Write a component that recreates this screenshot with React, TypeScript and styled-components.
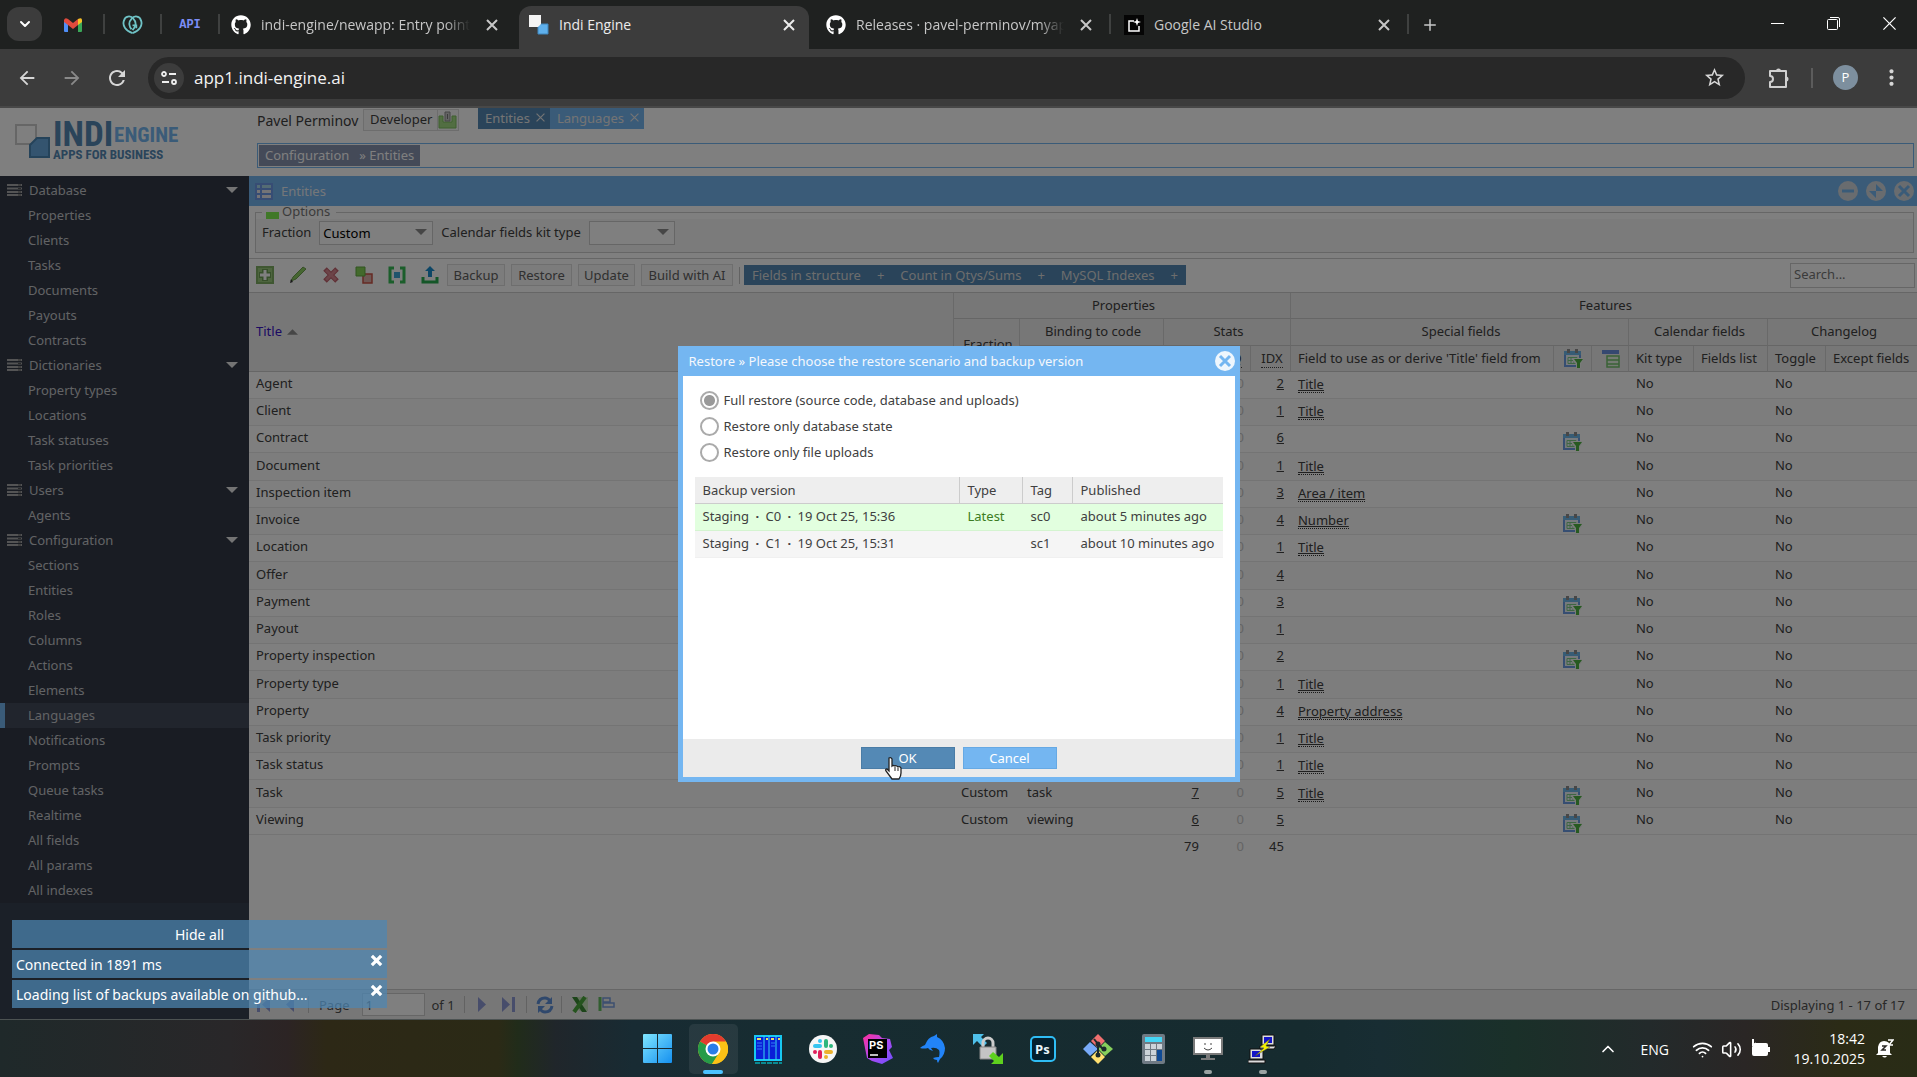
import React from "react";
import styled, { createGlobalStyle, css } from "styled-components";
import { ChevronDown, ChevronUp, Plus, Wifi, Volume2 } from "lucide-react";
import { FaGithub } from "react-icons/fa";
import { MdArrowBack, MdArrowForward, MdRefresh, MdStarBorder, MdMoreVert } from "react-icons/md";

const appFont = '"Noto Sans", "Open Sans", Tahoma, sans-serif';
const uiFont = '"Open Sans", "Noto Sans", sans-serif';

const Global = createGlobalStyle`
  *, *::before, *::after { box-sizing: border-box; }
  html, body, #root { height: 100%; }
  body { margin: 0; overflow: hidden; font-family: ${appFont}; font-size: 13px; color: #404040; background: #1f2120; }
  button, input, select { font: inherit; color: inherit; margin: 0; padding: 0; border: 0; background: none; border-radius: 0; outline: none; }
  svg { display: block; flex: none; }
  a { color: inherit; }
`;

const Screen = styled.div`
  height: 100%;
  display: flex;
  flex-direction: column;
`;

/* ---------- browser chrome ---------- */

const TabStrip = styled.div`
  height: 49px;
  flex: none;
  display: flex;
  align-items: flex-start;
  background: #1f2120;
  color: #c7c7c7;
  font: 14px/20px ${uiFont};
  padding-left: 7px;
`;
const TabMenu = styled.button`
  width: 35px;
  height: 34px;
  margin-top: 7px;
  border-radius: 12px !important;
  background: #3c3c3c !important;
  color: #fff !important;
  display: grid;
  place-items: center;
`;
const PinnedTab = styled.div<{ $w: number }>`
  width: ${p => p.$w}px;
  height: 49px;
  display: grid;
  place-items: center;
`;
const ApiMark = styled.span`
  font: bold 12px/14px "Liberation Mono", monospace;
  color: #7c8df5;
`;
const TabDivider = styled.div`
  width: 2px;
  height: 20px;
  margin-top: 14px;
  background: #3f4140;
`;
const Tab = styled.div<{ $w: number; $l?: number; $r?: number; $active?: boolean }>`
  width: ${p => p.$w}px;
  height: 43px;
  margin-top: 6px;
  padding: 0 ${p => p.$r || 13}px 6px ${p => p.$l || 12}px;
  display: flex;
  align-items: center;
  gap: 10px;
  ${p => p.$active && css`
    background: #3c3c3c;
    color: #ececec;
    border-radius: 12px 12px 0 0;
  `}
`;
const TabTitle = styled.span<{ $fade?: boolean }>`
  flex: 1;
  min-width: 0;
  overflow: hidden;
  white-space: nowrap;
  ${p => p.$fade && css`
    margin-right: 5px;
    mask-image: linear-gradient(90deg, #000 88%, transparent 100%);
  `}
`;
const PlainButton = styled.button`
  display: grid;
  place-items: center;
  flex: none;
`;
const WindowButtons = styled.div`
  margin-left: auto;
  display: flex;
  height: 47px;
  color: #fff;
  button { width: 56px; }
`;
const Toolbar = styled.div`
  height: 59px;
  flex: none;
  display: flex;
  align-items: center;
  background: #3c3c3c;
  border-bottom: 2px solid #484848;
  padding: 0 13px;
  color: #d6d6d6;
`;
const NavButton = styled(PlainButton)<{ $off?: boolean }>`
  width: 28px;
  height: 28px;
  margin-right: 17px !important;
  opacity: ${p => (p.$off ? 0.5 : 1)};
`;
const Omnibox = styled.div`
  flex: 1;
  height: 42px;
  border-radius: 21px;
  background: #282828;
  display: flex;
  align-items: center;
  padding: 0 19px 0 6px;
`;
const SiteInfo = styled(PlainButton)`
  width: 30px;
  height: 30px;
  border-radius: 50% !important;
  background: #3c3c3c !important;
`;
const Url = styled.input`
  flex: 1;
  margin-left: 10px !important;
  font: 17px/24px ${uiFont} !important;
  color: #f2f2f2 !important;
`;
const ToolbarEnd = styled.div`
  display: flex;
  align-items: center;
  padding-left: 23px;
`;
const ToolbarRule = styled.div`
  width: 2px;
  height: 20px;
  margin: 0 20px 0 21px;
  background: #5c5c5c;
`;
const Avatar = styled.button`
  width: 25px;
  height: 25px;
  border-radius: 50% !important;
  background: #7d8f9e !important;
  color: #fff !important;
  font: 13px/25px ${uiFont} !important;
  margin-right: 21px !important;
`;

/* ---------- page ---------- */

const Page = styled.div`
  position: relative;
  flex: 1;
  min-height: 0;
  display: flex;
  flex-direction: column;
  background: #fff;
`;
const PageHead = styled.header`
  height: 68px;
  flex: none;
  display: flex;
`;
const LogoBox = styled.div`
  width: 249px;
  padding: 14px 0 0 15px;
  display: flex;
  gap: 3px;
`;
const LogoText = styled.div`
  font-family: "Roboto Condensed", "Liberation Sans Narrow", "Liberation Sans", sans-serif;
  font-weight: bold;
  color: #5489b5;
`;
const LogoTop = styled.div`
  display: flex;
  align-items: center;
  height: 26px;
  font-size: 35px;
  line-height: 26px;
  span { font-size: 21px; color: #74b6f1; margin-left: 1px; }
`;
const LogoSub = styled.div`
  font-size: 13px;
  line-height: 14px;
`;
const HeadMain = styled.div`
  flex: 1;
  padding: 0 3px 0 8px;
`;
const HeadTop = styled.div`
  height: 35px;
  display: flex;
  align-items: flex-start;
  font-size: 14px;
`;
const UserName = styled.span`
  line-height: 26px;
  width: 106px;
  white-space: nowrap;
`;
const RoleBox = styled.div`
  display: flex;
  height: 22px;
  margin-top: 1px;
  border: 1px solid #dadada;
  background: #f8f8f8;
  line-height: 20px;
`;
const RoleName = styled.button`
  padding: 0 6px 2px !important;
  width: 74px;
  white-space: nowrap;
  border-right: 1px solid #dadada !important;
  line-height: 18px !important;
  font-size: 13px !important;
`;
const WorkTabs = styled.div`
  display: flex;
  margin-left: 19px;
`;
const WorkTab = styled.div<{ $active?: boolean }>`
  height: 21px;
  padding: 0 4px 2px 7px;
  display: flex;
  align-items: center;
  gap: 5px;
  font-size: 13px;
  line-height: 18px;
  color: #e8e8e8;
  background: ${p => (p.$active ? "#5489b5" : "#74b6f1")};
`;
const Crumbs = styled.nav`
  height: 25px;
  border: 1px solid #74b6f1;
  padding: 1px;
  display: flex;
  color: #fff;
`;
const Crumb = styled.a`
  display: block;
  height: 21px;
  line-height: 20px;
  background: #8894b0;
  text-decoration: none;
  padding: 0 6px;
  & + & { padding-left: 4px; }
`;
const Body = styled.div`
  flex: 1;
  min-height: 0;
  display: flex;
`;
const Sidebar = styled.nav`
  width: 249px;
  flex: none;
  background: #374150;
`;
const Menu = styled.ul`
  list-style: none;
  margin: 0;
  padding: 2px 0 0;
  background: #323846;
`;
const MenuItem = styled.li<{ $group?: boolean; $on?: boolean }>`
  height: 25px;
  display: flex;
  align-items: center;
  padding: 0 11px 1px ${p => (p.$group ? 7 : 28)}px;
  gap: 7px;
  color: #c4c6ca;
  ${p => p.$on && css`
    background: #424a5a;
    border-left: 5px solid #74b6f1;
    padding-left: 23px;
  `}
  a { flex: 1; text-decoration: none; line-height: 20px; }
`;
const Main = styled.main`
  flex: 1;
  min-width: 0;
  display: flex;
  flex-direction: column;
`;
const PanelTitle = styled.div`
  height: 30px;
  flex: none;
  display: flex;
  align-items: center;
  gap: 8px;
  padding: 0 3px 0 6px;
  background: #74b6f1;
  color: #e9eef3;
  h1 { flex: 1; margin: 0; font-size: 13px; font-weight: normal; line-height: 20px; }
`;
const PanelTools = styled.div`
  display: flex;
  gap: 8px;
`;
const OptionsArea = styled.div`
  height: 52px;
  flex: none;
  padding: 0 3px 0 6px;
`;
const Options = styled.fieldset`
  margin: 0;
  height: 47px;
  border: 1px solid #ccc;
  background: linear-gradient(transparent 6px, #f6f6f6 6px);
  padding: 0 6px;
  min-width: 0;
  legend {
    height: 13px;
    display: flex;
    align-items: center;
    gap: 3px;
    padding: 0 6px 2px 4px;
    color: #777;
    line-height: 11px;
  }
  legend::before { content: ""; width: 13px; height: 7px; margin-top: 8px; background: #80f050; }
`;
const OptionRow = styled.div`
  display: flex;
  align-items: center;
  height: 24px;
  margin-top: 2px;
  label { padding-bottom: 2px; }
`;
const Combo = styled.span<{ $w: number }>`
  position: relative;
  display: block;
  width: ${p => p.$w}px;
  height: 24px;
  margin: 0 8px;
  border: 1px solid #ccc;
  background: #fff;
  select { appearance: none; width: 100%; height: 22px; padding-left: 3px; color: #000; line-height: 20px; }
  svg { position: absolute; right: 5px; top: 7px; pointer-events: none; }
`;
const ActionBar = styled.div`
  height: 35px;
  flex: none;
  display: flex;
  align-items: center;
  border-top: 1px solid #ccc;
  border-bottom: 1px solid #ccc;
  padding: 0 2px 1px 7px;
`;
const IconRow = styled.div`
  display: flex;
  gap: 15px;
  margin-right: 8px;
  button { width: 18px; height: 18px; display: grid; place-items: center; }
`;
const BarButton = styled.button<{ $w: number }>`
  width: ${p => p.$w}px;
  height: 22px;
  margin-right: 6px !important;
  padding-bottom: 1px !important;
  border: 1px solid #dcdcdc !important;
  background: #f8f8f8 !important;
  white-space: nowrap;
  line-height: 18px !important;
  color: #606060 !important;
`;
const Rule = styled.span<{ $m?: string }>`
  width: 1px;
  height: 17px;
  background: #c4c4c4;
  margin: ${p => p.$m || "0 4px 0 0"};
`;
const CountBar = styled.div`
  display: flex;
  height: 20px;
  background: #5489b5;
  color: #dadada;
`;
const CountButton = styled.button`
  display: flex;
  gap: 16px;
  padding: 0 8px !important;
  line-height: 20px !important;
  white-space: nowrap;
`;
const Search = styled.input`
  width: 125px;
  height: 25px;
  margin-left: auto !important;
  padding: 0 3px 2px !important;
  border: 1px solid #ccc !important;
  &::placeholder { color: #777; opacity: 1; }
`;
const Grid = styled.table`
  width: 100%;
  table-layout: fixed;
  border-collapse: separate;
  border-spacing: 0;
  white-space: nowrap;
  line-height: 20px;
  th {
    background: #eee;
    font-weight: normal;
    border-right: 1px solid #d2d2d2;
    border-bottom: 1px solid #ccc;
    padding: 0 4px 2px 7px;
    height: 26px;
    overflow: hidden;
  }
  thead tr:nth-child(2) th { height: 27px; }
  th.last { border-right: 0; }
  th.left { text-align: left; }
  td { height: 27px; padding: 0 7px 4px; border-bottom: 1px solid #e8e8e8; overflow: hidden; }
  tbody tr:nth-child(4n) td { height: 28px; }
  tbody tr:nth-child(even) td { background: #fafafa; }
  tfoot td { border: 0; height: 26px; }
  .num { text-align: right; }
  .zero { text-align: right; color: #c8c8c8; }
  td svg { margin: 4px auto -4px; }
  th svg { margin: 2px auto 0; }
`;
const SortHead = styled.button`
  display: flex;
  align-items: center;
  gap: 5px;
  color: #3914c8 !important;
`;
const Dotted = styled.span`
  display: inline-block;
  line-height: 17px;
  border-bottom: 1px dotted #444;
`;
const FieldLink = styled.a`
  display: inline-block;
  line-height: 16px;
  border-bottom: 1px dotted #333;
  vertical-align: middle;
`;
const Spring = styled.div`
  flex: 1;
`;
const Pager = styled.footer`
  height: 30px;
  flex: none;
  display: flex;
  align-items: center;
  border-top: 1px solid #ccc;
  background: #eee;
  padding: 0 12px 0 6px;
  color: #505050;
  label { display: flex; align-items: center; gap: 12px; }
  input { width: 63px; height: 23px; border: 1px solid #ccc; background: #fff; padding-left: 3px; }
  button { width: 16px; height: 18px; display: grid; place-items: center; flex: none; }
  p { margin: 0 0 0 auto; }
`;
const Pair = styled.div`
  display: flex;
  gap: 11px;
`;
const OfCount = styled.span`
  margin-left: 7px;
`;

/* ---------- dialog over the page ---------- */

const Shade = styled.div`
  position: absolute;
  inset: 0;
  background: rgba(0, 0, 0, 0.5);
  display: flex;
  align-items: center;
  justify-content: center;
  padding-top: 1px;
`;
const Dialog = styled.section`
  width: 562px;
  height: 436px;
  display: flex;
  flex-direction: column;
  background: #74b6f1;
  padding: 0 5px 5px;
`;
const DialogHead = styled.div`
  height: 30px;
  display: flex;
  align-items: center;
  padding: 0 0 1px 6px;
  color: #f4f8fc;
  h2 { flex: 1; margin: 0; font-size: 13px; font-weight: normal; line-height: 20px; }
`;
const DialogBody = styled.div`
  flex: 1;
  background: #fff;
  padding: 11px 12px 0;
`;
const RadioLine = styled.label`
  display: flex;
  align-items: center;
  height: 26px;
  gap: 5px;
  padding-left: 5px;
  input {
    appearance: none;
    width: 19px;
    height: 19px;
    border: 2px solid #aaa;
    border-radius: 50%;
    background: #fff;
  }
  input:checked { background: radial-gradient(circle, #999 0 5px, #fff 6px); }
`;
const Backups = styled.table`
  width: 100%;
  margin-top: 12px;
  table-layout: fixed;
  border-collapse: separate;
  border-spacing: 0;
  white-space: nowrap;
  line-height: 20px;
  th { height: 27px; padding: 0 8px; background: #eee; text-align: left; font-weight: normal; border-bottom: 1px solid #ccc; border-right: 1px solid #ccc; }
  th:last-child { border-right: 0; }
  td { height: 27px; padding: 0 8px 2px; background: #f5f5f5; border-bottom: 1px solid #f0f0f0; }
  tr.latest td { background: #e2ffdf; border-color: #d4f4d0; }
  td.tag { color: #3c7d22; }
`;
const Dot = styled.span`
  margin: 0 3px;
  font-weight: bold;
`;
const DialogFoot = styled.div`
  height: 38px;
  display: flex;
  align-items: center;
  justify-content: center;
  gap: 8px;
  background: #ebebeb;
`;
const DialogButton = styled.button<{ $main?: boolean }>`
  position: relative;
  width: 94px;
  height: 22px;
  line-height: 20px !important;
  color: #fff !important;
  border: 1px solid ${p => (p.$main ? "#4a7ca6" : "#66a9e4")} !important;
  background: ${p => (p.$main ? "#5489b5" : "#74b6f1")} !important;
`;
const Pointer = styled.svg`
  position: absolute;
  left: 22px;
  top: 8px;
`;

const Toasts = styled.div`
  position: absolute;
  left: 12px;
  bottom: 11px;
  width: 375px;
  display: flex;
  flex-direction: column;
  gap: 2px;
`;
const Toast = styled.div<{ $center?: boolean }>`
  height: 28px;
  display: flex;
  align-items: flex-start;
  justify-content: ${p => (p.$center ? "center" : "space-between")};
  padding: 0 4px !important;
  background: rgba(77, 135, 179, 0.72) !important;
  color: #fff !important;
  font-size: 14px !important;
  line-height: 29px !important;
  white-space: nowrap;
  svg { margin-top: 4px; }
`;

/* ---------- desktop task bar ---------- */

const TaskBar = styled.div`
  position: relative;
  height: 58px;
  flex: none;
  display: flex;
  justify-content: center;
  align-items: flex-start;
  border-top: 1px solid #4c5252;
  background: linear-gradient(90deg, #1f292a 0, #292729 12%, #2c2424 15%, #2d2816 17%, #2b2a16 26%, #212c1a 27%, #20262b 29%, #182b33 33%, #172c31 40%, #162b2f 68%, #182d33 72%, #1a3029 79%, #232a2b 86%, #2a2625 91%, #2b2b16 96%, #292c16 100%);
  color: #fff;
  font-family: ${uiFont};
`;
const Apps = styled.div`
  display: flex;
  gap: 6px;
  padding: 4px 0 0 4px;
`;
const AppButton = styled.button<{ $on?: boolean }>`
  position: relative;
  width: 49px;
  height: 50px;
  display: grid;
  place-items: center;
  border-radius: 5px !important;
  ${p => p.$on && css`background: rgba(255, 255, 255, 0.07) !important;`}
`;
const RunMark = styled.i<{ $on?: boolean }>`
  position: absolute;
  bottom: 0;
  left: 50%;
  translate: -50% 0;
  height: 4px;
  width: ${p => (p.$on ? 20 : 8)}px;
  border-radius: 2px;
  background: ${p => (p.$on ? "#4cc2ff" : "#9aa3a3")};
`;
const Tray = styled.div`
  position: absolute;
  right: 23px;
  top: 0;
  height: 58px;
  display: flex;
  align-items: center;
  font-size: 14px;
`;
const Clock = styled.div`
  width: 84px;
  text-align: right;
  line-height: 20px;
  margin: 0 11px 0 9px;
`;
const TrayIcons = styled.div`
  display: flex;
  align-items: center;
  gap: 8px;
  margin-left: 23px;
`;
const TrayMore = styled(PlainButton)`
  margin-right: 23px !important;
`;

/* ---------- drawings ---------- */

const Cross = ({ s = 14, w = 2, c = "currentColor" }: { s?: number; w?: number; c?: string }) => (
  <svg width={s} height={s} viewBox="0 0 14 14"><path d="M2 2l10 10M12 2L2 12" stroke={c} strokeWidth={w} fill="none" /></svg>
);
const Tri = ({ up, c = "#8c8c8c", w = 12 }: { up?: boolean; c?: string; w?: number }) => (
  <svg width={w} height="6" viewBox="0 0 12 6"><path d={up ? "M0 6L6 0L12 6Z" : "M0 0H12L6 6Z"} fill={c} /></svg>
);
const Gmail = () => (
  <svg width="18" height="14" viewBox="0 0 18 14">
    <path d="M0 2v11a1 1 0 001 1h3V5z" fill="#4f8ef7" /><path d="M18 2v11a1 1 0 01-1 1h-3V5z" fill="#3aa757" />
    <path d="M0 2Q1-1 4 1l5 4 5-4v6l-5 4-5-4-4-3z" fill="#e04a3d" /><path d="M14 1q4-2 4 1v2l-4 3z" fill="#f6bf26" />
  </svg>
);
const GoDaddy = () => (
  <svg width="21" height="19" viewBox="0 0 22 20" fill="none" stroke="#6fc3c6" strokeWidth="1.900">
    <path d="M11 19C4 17 0 11 2 6c1-5 7-6 10-2 4 4 2 9-1 12" /><path d="M11 19c7-2 11-8 9-13-1-5-7-6-10-2-4 4-2 9 0 11" /><path d="M11 11h4v3" />
  </svg>
);
const Squares = () => (
  <svg width="20" height="20" viewBox="0 0 20 20"><path d="M9 9h10v10H9z" fill="#5fb0ec" stroke="#3e86bd" /><path d="M0 0h12v9l-3 3H0z" fill="#f4f4f4" /></svg>
);
const Studio = () => (
  <svg width="20" height="20" viewBox="0 0 20 20"><path d="M0 0h20v20H0z" fill="#050505" /><path d="M10 6H5v10h10v-5" fill="none" stroke="#fff" strokeWidth="1.500" /><path d="M13 3l1 3 3 1-3 1-1 3-1-3-3-1 3-1z" fill="#fff" /></svg>
);
const Logo = () => (
  <svg width="35" height="37" viewBox="0 0 35 37"><path d="M1 3h20v19H1z" fill="#fff" stroke="#ccc" strokeWidth="2" /><path d="M22 16h12v19H15V23z" fill="#68a8de" stroke="#4b86b4" strokeWidth="2" /></svg>
);
const Stack = () => (
  <svg width="15" height="12" viewBox="0 0 15 12"><path d="M0 1h15M0 4.500h15M0 8h15M0 11h15" stroke="#a8a8aa" strokeWidth="2" /><path d="M11 1h3M11 4.500h3M11 8h3M11 11h3" stroke="#555" /></svg>
);
const ListIcon = () => (
  <svg width="18" height="17" viewBox="0 0 18 17"><path d="M0 0h18v17H0z" fill="#6f9be8" /><path d="M2 2h3v3H2zM7 2h9v3H7z" fill="#a8d8e8" /><path d="M2 7h3v3H2zM2 12h3v3H2zM7 7h9v3H7zM7 12h9v3H7z" fill="#e8e8ee" /></svg>
);
const RoundTool = ({ kind, c = "#d2d9df", b = "#74b6f1" }: { kind: string; c?: string; b?: string }) => (
  <svg width="20" height="20" viewBox="0 0 20 20"><circle cx="10" cy="10" r="10" fill={c} />
    {kind === "min" && <path d="M4 10h12" stroke={b} strokeWidth="3" />}
    {kind === "max" && <path d="M10 3l7 7h-7zM10 17l-7-7h7z" fill={b} />}
    {kind === "close" && <path d="M5 5l10 10M15 5L5 15" stroke={b} strokeWidth="3" />}
  </svg>
);
const RoleIcon = () => (
  <svg width="20" height="18" viewBox="0 0 20 18"><path d="M1 5h4v6h9V5h4v12H1z" fill="#a4dc84" stroke="#7cc05c" /><path d="M7 1h5v9H7z" fill="#c8c8c8" stroke="#8c8c8c" /><path d="M9.500 3v5" stroke="#777" /></svg>
);
const CalendarFilter = () => (
  <svg width="19" height="19" viewBox="0 0 19 19">
    <path d="M1 4h15v13H1z" fill="#eef4fa" stroke="#6c9ce4" strokeWidth="2" /><path d="M0 2h17v4H0z" fill="#6fb8ea" />
    <path d="M4.500 0v4M12.500 0v4" stroke="#8f8f8f" strokeWidth="3" /><path d="M4 8.500h9v6H4zM4 11.500h9M7 8v6M10 8v6" fill="none" stroke="#7fcf86" />
    <path d="M9 9h10v3l-2 3v4h-5v-4l-3-3z" fill="#f4f8f4" /><path d="M10 10h9l-3 4v5h-3v-5z" fill="#4fb443" />
  </svg>
);
const PanelList = () => (
  <svg width="18" height="19" viewBox="0 0 18 19"><path d="M0 1h17v4H0z" fill="#6a90e0" /><path d="M5 7h12v11H5zM5 11h12M5 15h12" fill="#eaf6e6" stroke="#74c46e" strokeWidth="1.500" /></svg>
);
const Svg18 = ({ children }: { children: React.ReactNode }) => <svg width="18" height="18" viewBox="0 0 18 18">{children}</svg>;
const toolIcons: [string, React.ReactNode][] = [
  ["Add", <Svg18><path d="M1 1h16v16H1z" fill="#9bc87c" stroke="#7fae62" strokeWidth="2" /><path d="M9 3v12M3 9h12" stroke="#6f9f56" strokeWidth="6" /><path d="M9 4v10M4 9h10" stroke="#fff" strokeWidth="3" /></Svg18>],
  ["Edit", <Svg18><path d="M2 15l2-4L14 1l3 2L7 13z" fill="#8ccc62" stroke="#6f9f50" /><path d="M1 17l3-1-2-3z" fill="#333" /></Svg18>],
  ["Delete", <Svg18><path d="M3 3l12 12M15 3L3 15" stroke="#c0606c" strokeWidth="5" /><path d="M4 4l10 10M14 4L4 14" stroke="#d88891" strokeWidth="3" /></Svg18>],
  ["Duplicate", <Svg18><path d="M8 8h9v9H8z" fill="#dcb0aa" stroke="#cc5448" strokeWidth="1.500" /><path d="M1 1h9v9H1z" fill="#86d458" stroke="#62aa42" /></Svg18>],
  ["Brackets", <Svg18><path d="M6 2H2v14h4M12 2h4v14h-4" fill="none" stroke="#36bc56" strokeWidth="3" /><path d="M6 6h6v6H6z" fill="#40a8d8" /></Svg18>],
  ["Export", <Svg18><path d="M2 11v5h14v-5" fill="none" stroke="#28ac50" strokeWidth="3" /><path d="M9 0l5 5h-3v6H7V5H4z" fill="#1a8ccc" /></Svg18>],
];
const HandPointer = () => (
  <Pointer width="20" height="24" viewBox="0 0 20 24">
    <path d="M5 2q2-1 3 1v7q1-1 3 0 1-1 3 1 2-1 3 1v5q0 3-2 6H8L2 15q-1-2 1-2l2 2z" fill="#fff" stroke="#222" strokeWidth="1.300" /><path d="M11 11v4M14 12v3" stroke="#222" />
  </Pointer>
);

const taskIcons: [string, React.ReactNode, string?][] = [
  ["Start", <svg width="30" height="30" viewBox="0 0 30 30"><defs><linearGradient id="win" x1="0" y1="0" x2="1" y2="1"><stop offset="0" stopColor="#7fe6ff" /><stop offset="1" stopColor="#1590f0" /></linearGradient></defs><path d="M0 1q0-1 1-1h13v14H0zM15 0h13q1 0 1 1v13H15zM0 15h14v14H1q-1 0-1-1zM15 15h14v13q0 1-1 1H15z" fill="url(#win)" /></svg>],
  ["Chrome", <svg width="30" height="30" viewBox="0 0 30 30"><circle cx="15" cy="15" r="15" fill="#fbc116" /><path d="M15 15L2 7.500A15 15 0 0128 7.500z" fill="#e33b2e" /><path d="M2 7.500A15 15 0 0014 30l7.500-12L15 15z" fill="#269b48" /><path d="M15 7.500h13A15 15 0 0114 30l7.500-11z" fill="#fbc116" /><circle cx="15" cy="15" r="7.500" fill="#fff" /><circle cx="15" cy="15" r="5.500" fill="#2a7de8" /></svg>, "on"],
  ["Far Manager", <svg width="28" height="29" viewBox="0 0 28 29"><path d="M1 1h26v24H1z" fill="#0a1fd8" stroke="#18c8f0" strokeWidth="2" /><path d="M10 1v24M15 1v24M22 1v24" stroke="#38d8f0" /><path d="M3 4h4M12 4h2M17 4h3M24 4h2" stroke="#e8e060" strokeWidth="2" /><path d="M3 8h5M3 11h5M3 14h5M17 8h4M17 11h4" stroke="#3080f8" /><path d="M1 28h27" stroke="#0a8a92" strokeWidth="2" strokeDasharray="5 1" /></svg>],
  ["Slack", <svg width="28" height="28" viewBox="0 0 28 28"><circle cx="14" cy="14" r="14" fill="#f6f6f6" /><g fill="#36c5f0"><rect x="4" y="9" width="9" height="4" rx="2" /><circle cx="11" cy="6" r="2" /></g><g fill="#2eb67d"><rect x="15" y="4" width="4" height="9" rx="2" /><circle cx="22" cy="11" r="2" /></g><g fill="#ecb22e"><rect x="15" y="15" width="9" height="4" rx="2" /><circle cx="17" cy="22" r="2" /></g><g fill="#e01e5a"><rect x="9" y="15" width="4" height="9" rx="2" /><circle cx="6" cy="17" r="2" /></g></svg>],
  ["PhpStorm", <svg width="30" height="30" viewBox="0 0 30 30"><defs><linearGradient id="ps" x1="0" y1="0" x2="1" y2="1"><stop offset="0" stopColor="#ff2e9a" /><stop offset="0.500" stopColor="#b04af0" /><stop offset="1" stopColor="#6a50ff" /></linearGradient></defs><path d="M0 4l6-4 10 1 3 3 8 1 2 8-3 3 4 8-11 6-10-3-5-3z" fill="url(#ps)" /><path d="M5 5h19v19H5z" fill="#000" /><path d="M7 21h8" stroke="#fff" strokeWidth="1.500" /><text x="6" y="15" fontSize="11" fontWeight="bold" fontFamily="Inter, sans-serif" fill="#fff">PS</text></svg>],
  ["Dolphin", <svg width="26" height="30" viewBox="0 0 26 30"><path d="M0 14q2-2 5-3Q8 3 14 2l3-2q0 2 0 3 7 3 8 11 0 7-5 11l-2 4q-1-1-1-3-3 0-4-2 3-1 6-1 1-5 0-7-3-3-8-2l2 3q-4-1-5-3-4 1-8 0z" fill="#2284f8" /></svg>],
  ["WinSCP", <svg width="30" height="30" viewBox="0 0 30 30"><path d="M0 0h11L8 3l6 6-4 4-6-6-4 4z" fill="#4fc0ea" /><path d="M10 14V9a5 5 0 0110 0v5" fill="none" stroke="#ccc" strokeWidth="3" /><path d="M7 13h16v12H7z" fill="#c4c4c4" stroke="#888" /><path d="M30 30H18l3-3-5-5 4-4 6 5 4-4z" fill="#5ed01e" /></svg>],
  ["Photoshop", <svg width="26" height="26" viewBox="0 0 26 26"><rect x="1" y="1" width="24" height="24" rx="4" fill="#04202e" stroke="#2fbdf5" strokeWidth="2" /><text x="5" y="18" fontSize="13" fontWeight="bold" fontFamily="Open Sans, sans-serif" fill="#e8f4fa">Ps</text></svg>],
  ["Git", <svg width="30" height="30" viewBox="0 0 30 30"><path d="M15 0l7 7-7 7-7-7z" fill="#f07070" /><path d="M22 8l8 7-8 7-7-7z" fill="#86cf5c" /><path d="M15 16l7 7-7 7-7-7z" fill="#ffe070" /><path d="M7 8l8 7-8 7-7-7z" fill="#78aaf8" /><path d="M11 5l4 5v12M15 10l5 5" fill="none" stroke="#1c2a2c" strokeWidth="2" /><circle cx="15" cy="10" r="2.500" fill="#1c2a2c" /><circle cx="15" cy="21" r="2.500" fill="#1c2a2c" /><circle cx="21" cy="15" r="2.500" fill="#1c2a2c" /></svg>],
  ["Calculator", <svg width="23" height="30" viewBox="0 0 23 30"><rect width="23" height="30" rx="2" fill="#6f7a84" /><path d="M3 3h17v5H3z" fill="#45d5f5" /><path d="M3 10h5v5H3zM9 10h5v5H9zM15 10h5v5h-5zM3 16h5v5H3zM9 16h5v5H9zM3 22h5v5H3zM9 22h5v5H9z" fill="#ccd3d9" /><path d="M15 16h5v11h-5z" fill="#0f4a94" /></svg>],
  ["Remote", <svg width="30" height="24" viewBox="0 0 30 24"><path d="M1 1h28v16H1z" fill="#fff" stroke="#7a7a7a" strokeWidth="2" /><path d="M13 18h4v3h5v2H8v-2h5z" fill="#7a7a7a" /><path d="M12 6v2M18 6v2M11 11q4 4 8 0" stroke="#444" fill="none" /></svg>, "run"],
  ["PuTTY", <svg width="30" height="30" viewBox="0 0 30 30"><path d="M14 1h12v10H14zM12 12h16l-2 3H12zM2 15h13v10H2zM0 26h17v3H0z" fill="#ddd" stroke="#111" /><path d="M16 3h8v6h-8zM4 17h8v6H4z" fill="#1414c8" /><path d="M22 5l-10 8 4 1-9 8 15-9-4-1z" fill="#f4f000" stroke="#444" strokeWidth="0.500" /></svg>, "run"],
];

/* ---------- data ---------- */

const menu: [string, string[]][] = [
  ["Database", ["Properties", "Clients", "Tasks", "Documents", "Payouts", "Contracts"]],
  ["Dictionaries", ["Property types", "Locations", "Task statuses", "Task priorities"]],
  ["Users", ["Agents"]],
  ["Configuration", ["Sections", "Entities", "Roles", "Columns", "Actions", "Elements", "Languages", "Notifications", "Prompts", "Queue tasks", "Realtime", "All fields", "All params", "All indexes"]],
];

type Row = { title: string; table: string; qty: number; idx: number; field?: string; cal?: boolean };
const rows: Row[] = [
  { title: "Agent", table: "agent", qty: 5, idx: 2, field: "Title" },
  { title: "Client", table: "client", qty: 4, idx: 1, field: "Title" },
  { title: "Contract", table: "contract", qty: 8, idx: 6, cal: true },
  { title: "Document", table: "document", qty: 4, idx: 1, field: "Title" },
  { title: "Inspection item", table: "inspectionItem", qty: 5, idx: 3, field: "Area / item" },
  { title: "Invoice", table: "invoice", qty: 6, idx: 4, field: "Number", cal: true },
  { title: "Location", table: "location", qty: 1, idx: 1, field: "Title" },
  { title: "Offer", table: "offer", qty: 5, idx: 4 },
  { title: "Payment", table: "payment", qty: 5, idx: 3, cal: true },
  { title: "Payout", table: "payout", qty: 4, idx: 1 },
  { title: "Property inspection", table: "inspection", qty: 4, idx: 2, cal: true },
  { title: "Property type", table: "propertyType", qty: 1, idx: 1, field: "Title" },
  { title: "Property", table: "property", qty: 8, idx: 4, field: "Property address" },
  { title: "Task priority", table: "taskPriority", qty: 3, idx: 1, field: "Title" },
  { title: "Task status", table: "taskStatus", qty: 3, idx: 1, field: "Title" },
  { title: "Task", table: "task", qty: 7, idx: 5, field: "Title", cal: true },
  { title: "Viewing", table: "viewing", qty: 6, idx: 5, cal: true },
];
const columnWidths = [66, 144, 42, 45, 40, 263, 38, 37, 65, 74, 58, 91];

const PagerArrow = ({ flip, bar }: { flip?: boolean; bar?: boolean }) => (
  <svg width="16" height="15" viewBox="0 0 16 15"><g transform={flip ? "matrix(-1 0 0 1 16 0)" : undefined} fill="#8f9ad6"><path d={bar ? "M1 0l8 7.500L1 15z" : "M4 0l8 7.500L4 15z"} />{bar && <path d="M11 0h3v15h-3z" />}</g></svg>
);

export default function App() {
  return (
    <>
      <Global />
      <Screen>
        <TabStrip>
          <TabMenu aria-label="Search tabs"><ChevronDown size={16} strokeWidth={3} /></TabMenu>
          <PinnedTab $w={61}><Gmail /></PinnedTab><TabDivider />
          <PinnedTab $w={55}><GoDaddy /></PinnedTab><TabDivider />
          <PinnedTab $w={56}><ApiMark>API</ApiMark></PinnedTab><TabDivider />
          <Tab $w={299} $l={11} $r={20}><FaGithub size={20} color="#fff" /><TabTitle $fade>indi-engine/newapp: Entry point</TabTitle><PlainButton aria-label="Close tab"><Cross /></PlainButton></Tab>
          <Tab $w={290} $l={10} $active><Squares /><TabTitle>Indi Engine</TabTitle><PlainButton aria-label="Close tab"><Cross /></PlainButton></Tab>
          <Tab $w={300} $l={17} $r={16}><FaGithub size={20} color="#fff" /><TabTitle $fade>Releases · pavel-perminov/myapp</TabTitle><PlainButton aria-label="Close tab"><Cross /></PlainButton></Tab>
          <TabDivider />
          <Tab $w={296} $l={13} $r={16}><Studio /><TabTitle>Google AI Studio</TabTitle><PlainButton aria-label="Close tab"><Cross /></PlainButton></Tab>
          <TabDivider />
          <PinnedTab $w={41}><Plus size={18} strokeWidth={2} /></PinnedTab>
          <WindowButtons>
            <PlainButton aria-label="Minimize"><svg width="13" height="13"><path d="M0 6.500h13" stroke="#fff" /></svg></PlainButton>
            <PlainButton aria-label="Restore"><svg width="13" height="13" viewBox="0 0 13 13" fill="none" stroke="#fff"><rect x="0.500" y="2.500" width="10" height="10" rx="1" /><path d="M3 .5h8q1.500 0 1.500 1.500v8" /></svg></PlainButton>
            <PlainButton aria-label="Close"><Cross s={17} w={1} /></PlainButton>
          </WindowButtons>
        </TabStrip>
        <Toolbar>
          <NavButton aria-label="Back"><MdArrowBack size={22} /></NavButton>
          <NavButton $off aria-label="Forward"><MdArrowForward size={22} /></NavButton>
          <NavButton aria-label="Reload"><MdRefresh size={24} /></NavButton>
          <Omnibox>
            <SiteInfo aria-label="Site information"><svg width="16" height="14" viewBox="0 0 16 14" fill="none" stroke="#eee" strokeWidth="1.800"><circle cx="3" cy="3" r="2" /><path d="M8 3h7M1 11h7" /><circle cx="13" cy="11" r="2" /></svg></SiteInfo>
            <Url aria-label="Address" defaultValue="app1.indi-engine.ai" />
            <PlainButton aria-label="Bookmark"><MdStarBorder size={23} /></PlainButton>
          </Omnibox>
          <ToolbarEnd>
            <PlainButton aria-label="Extensions"><svg width="22" height="22" viewBox="0 0 22 22" fill="none" stroke="#d0d0d0" strokeWidth="2"><path d="M2 4h16v16H2v-5q3 0 3-3t-3-3z" strokeLinejoin="round" /><path d="M8 4a2.500 2.500 0 015 0zM18 9.500a2.500 2.500 0 010 5z" fill="#d0d0d0" stroke="none" /></svg></PlainButton>
            <ToolbarRule />
            <Avatar>P</Avatar>
            <PlainButton aria-label="Menu"><MdMoreVert size={25} /></PlainButton>
          </ToolbarEnd>
        </Toolbar>

        <Page>
          <PageHead>
            <LogoBox>
              <Logo />
              <LogoText><LogoTop>INDI<span>ENGINE</span></LogoTop><LogoSub>APPS FOR BUSINESS</LogoSub></LogoText>
            </LogoBox>
            <HeadMain>
              <HeadTop>
                <UserName>Pavel Perminov</UserName>
                <RoleBox><RoleName>Developer</RoleName><PlainButton aria-label="Switch"><RoleIcon /></PlainButton></RoleBox>
                <WorkTabs>
                  <WorkTab $active>Entities<PlainButton aria-label="Close Entities"><Cross s={11} w={1.5} /></PlainButton></WorkTab>
                  <WorkTab>Languages<PlainButton aria-label="Close Languages"><Cross s={11} w={1.5} /></PlainButton></WorkTab>
                </WorkTabs>
              </HeadTop>
              <Crumbs><Crumb href="#configuration">Configuration</Crumb><Crumb href="#entities">» Entities</Crumb></Crumbs>
            </HeadMain>
          </PageHead>
          <Body>
            <Sidebar>
              <Menu>
                {menu.map(([group, items]) => (
                  <React.Fragment key={group}>
                    <MenuItem $group><Stack /><a href="#group">{group}</a><Tri c="#e8e8e8" /></MenuItem>
                    {items.map(i => <MenuItem key={i} $on={i === "Languages"}><a href="#item">{i}</a></MenuItem>)}
                  </React.Fragment>
                ))}
              </Menu>
            </Sidebar>
            <Main>
              <PanelTitle>
                <ListIcon /><h1>Entities</h1>
                <PanelTools>
                  <PlainButton aria-label="Minimize panel"><RoundTool kind="min" /></PlainButton>
                  <PlainButton aria-label="Maximize panel"><RoundTool kind="max" /></PlainButton>
                  <PlainButton aria-label="Close panel"><RoundTool kind="close" /></PlainButton>
                </PanelTools>
              </PanelTitle>
              <OptionsArea>
                <Options>
                  <legend>Options</legend>
                  <OptionRow>
                    <label htmlFor="fraction">Fraction</label>
                    <Combo $w={114}><select id="fraction"><option>Custom</option></select><Tri /></Combo>
                    <label htmlFor="kit">Calendar fields kit type</label>
                    <Combo $w={86}><select id="kit"><option></option></select><Tri /></Combo>
                  </OptionRow>
                </Options>
              </OptionsArea>
              <ActionBar>
                <IconRow>{toolIcons.map(([n, i]) => <button key={n} aria-label={n}>{i}</button>)}</IconRow>
                <BarButton $w={58}>Backup</BarButton>
                <BarButton $w={61}>Restore</BarButton>
                <BarButton $w={57}>Update</BarButton>
                <BarButton $w={92}>Build with AI</BarButton>
                <Rule />
                <CountBar>
                  {["Fields in structure", "Count in Qtys/Sums", "MySQL Indexes"].map(t => <CountButton key={t}>{t}<span>+</span></CountButton>)}
                </CountBar>
                <Search aria-label="Search" placeholder="Search..." />
              </ActionBar>
              <Grid>
                <colgroup><col />{columnWidths.map((w, i) => <col key={i} width={w} />)}</colgroup>
                <thead>
                  <tr><th rowSpan={3} className="left"><SortHead>Title<Tri up w={11} /></SortHead></th><th colSpan={5}>Properties</th><th colSpan={7} className="last">Features</th></tr>
                  <tr><th rowSpan={2}>Fraction</th><th>Binding to code</th><th colSpan={3}>Stats</th><th colSpan={3}>Special fields</th><th colSpan={2}>Calendar fields</th><th colSpan={2} className="last">Changelog</th></tr>
                  <tr>
                    <th className="left">Table</th><th><Dotted>QTY</Dotted></th><th><Dotted>INQ</Dotted></th><th><Dotted>IDX</Dotted></th>
                    <th className="left">Field to use as or derive 'Title' field from</th><th><CalendarFilter /></th><th><PanelList /></th>
                    <th className="left">Kit type</th><th className="left">Fields list</th><th className="left">Toggle</th><th className="left last">Except fields</th>
                  </tr>
                </thead>
                <tbody>
                  {rows.map(r => (
                    <tr key={r.title}>
                      <td>{r.title}</td><td>Custom</td><td>{r.table}</td>
                      <td className="num"><a href="#fields">{r.qty}</a></td><td className="zero">0</td><td className="num"><a href="#indexes">{r.idx}</a></td>
                      <td>{r.field && <FieldLink href="#field">{r.field}</FieldLink>}</td>
                      <td>{r.cal && <CalendarFilter />}</td><td /><td>No</td><td /><td>No</td><td />
                    </tr>
                  ))}
                </tbody>
                <tfoot>
                  <tr><td colSpan={3} /><td className="num">79</td><td className="zero">0</td><td className="num">45</td><td colSpan={7} /></tr>
                </tfoot>
              </Grid>
              <Spring />
              <Pager>
                <Pair>
                  <button aria-label="First page"><PagerArrow flip bar /></button>
                  <button aria-label="Previous page"><PagerArrow flip /></button>
                </Pair>
                <Rule $m="0 10px" />
                <label>Page <input defaultValue="1" /></label>
                <OfCount>of 1</OfCount>
                <Rule $m="0 9px" />
                <Pair>
                  <button aria-label="Next page"><PagerArrow /></button>
                  <button aria-label="Last page"><PagerArrow bar /></button>
                </Pair>
                <Rule $m="0 9px" />
                <button aria-label="Refresh"><svg width="18" height="18" viewBox="0 0 18 18" fill="none" stroke="#5f90d8" strokeWidth="3"><path d="M2 8q1-6 7-6 3 0 5 3M16 10q-1 6-7 6-3 0-5-3" /><path d="M16 1v7H9zM2 17v-7h7z" fill="#5f90d8" stroke="none" /></svg></button>
                <Rule $m="0 9px" />
                <Pair>
                  <button aria-label="Excel"><svg width="18" height="17" viewBox="0 0 18 17"><path d="M6 1h11v14H8z" fill="#c8e4bc" /><path d="M1 1h5l10 15h-5z" fill="#3a8a34" /><path d="M14 1L3 16" stroke="#4aa83c" strokeWidth="4" /></svg></button>
                  <button aria-label="Report"><svg width="17" height="17" viewBox="0 0 17 17"><path d="M2 1v14" stroke="#62bc60" strokeWidth="3" /><path d="M5 2h7v4H5zM5 7h11v4H5z" fill="none" stroke="#7a9fe0" strokeWidth="1.500" /></svg></button>
                </Pair>
                <p>Displaying 1 - 17 of 17</p>
              </Pager>
            </Main>
          </Body>

          <Shade>
            <Dialog role="dialog" aria-labelledby="dialog-title">
              <DialogHead><h2 id="dialog-title">Restore » Please choose the restore scenario and backup version</h2><PlainButton aria-label="Close dialog"><RoundTool kind="close" c="#eef6fd" /></PlainButton></DialogHead>
              <DialogBody>
                <RadioLine><input type="radio" name="scenario" defaultChecked />Full restore (source code, database and uploads)</RadioLine>
                <RadioLine><input type="radio" name="scenario" />Restore only database state</RadioLine>
                <RadioLine><input type="radio" name="scenario" />Restore only file uploads</RadioLine>
                <Backups>
                  <colgroup><col /><col width={63} /><col width={50} /><col width={150} /></colgroup>
                  <thead><tr><th>Backup version</th><th>Type</th><th>Tag</th><th>Published</th></tr></thead>
                  <tbody>
                    <tr className="latest"><td>Staging <Dot>·</Dot> C0 <Dot>·</Dot> 19 Oct 25, 15:36</td><td className="tag">Latest</td><td>sc0</td><td>about 5 minutes ago</td></tr>
                    <tr><td>Staging <Dot>·</Dot> C1 <Dot>·</Dot> 19 Oct 25, 15:31</td><td /><td>sc1</td><td>about 10 minutes ago</td></tr>
                  </tbody>
                </Backups>
              </DialogBody>
              <DialogFoot>
                <DialogButton $main>OK<HandPointer /></DialogButton>
                <DialogButton>Cancel</DialogButton>
              </DialogFoot>
            </Dialog>
          </Shade>

          <Toasts>
            <Toast $center as="button">Hide all</Toast>
            <Toast>Connected in 1891 ms<PlainButton aria-label="Dismiss"><Cross s={13} w={3.5} /></PlainButton></Toast>
            <Toast>Loading list of backups available on github...<PlainButton aria-label="Dismiss"><Cross s={13} w={3.5} /></PlainButton></Toast>
          </Toasts>
        </Page>

        <TaskBar>
          <Apps>
            {taskIcons.map(([n, i, s]) => <AppButton key={n} aria-label={n} $on={s === "on"}>{i}{s && <RunMark $on={s === "on"} />}</AppButton>)}
          </Apps>
          <Tray>
            <TrayMore aria-label="Hidden icons"><ChevronUp size={20} /></TrayMore>
            <span>ENG</span>
            <TrayIcons>
              <Wifi size={21} />
              <Volume2 size={21} strokeWidth={1.8} />
              <svg width="22" height="20" viewBox="0 0 22 20"><path d="M5 4h11q2 0 2 2v2h2v5h-2v2q0 2-2 2H4q-2 0-2-2V8z" fill="#fff" /><path d="M3 0v6l2-1v5" stroke="#fff" fill="none" strokeWidth="2" /></svg>
            </TrayIcons>
            <Clock>18:42<br />19.10.2025</Clock>
            <svg width="18" height="20" viewBox="0 0 18 20"><path d="M2 14V8q1-6 6-6 6 0 6 6v6l2 2H0zM6 17h5q-2 3-5 0z" fill="#fff" /><path d="M12 1h5l-4 5h4M6 7h4l-4 4h4" stroke="#fff" fill="none" strokeWidth="1.500" /><path d="M6 7h4l-4 4h4" stroke="#2a2825" fill="none" strokeWidth="1.500" /></svg>
          </Tray>
        </TaskBar>
      </Screen>
    </>
  );
}
